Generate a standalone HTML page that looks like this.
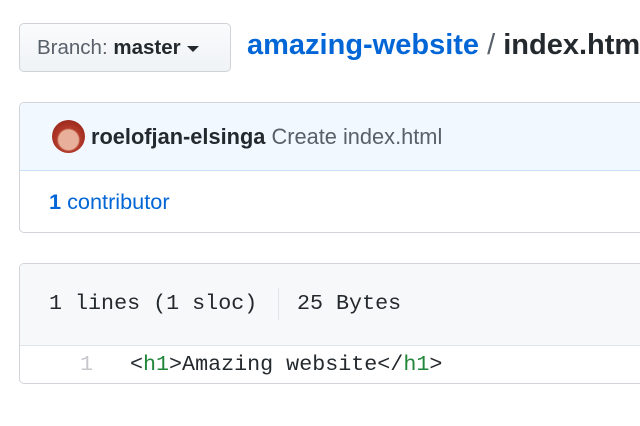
<!DOCTYPE html>
<html><head><style>
body{margin:0;width:640px;height:426px;overflow:hidden;background:#fff;font-family:"Liberation Sans",sans-serif;position:relative}
.btn{position:absolute;left:19px;top:23px;width:212px;height:49px;border:1px solid #cfd3d7;border-radius:5px;background:linear-gradient(#fafbfc,#eff3f6);box-sizing:border-box;font-size:20.5px;line-height:47px;padding-left:17px;color:#586069;white-space:nowrap}
.btn b{color:#24292e}
.caret{display:inline-block;width:0;height:0;border-left:6px solid transparent;border-right:6px solid transparent;border-top:6px solid #24292e;vertical-align:middle;margin-left:6px}
.bc{position:absolute;left:247px;top:29px;font-size:29px;font-weight:bold;color:#24292e;white-space:nowrap}
.bc a{color:#0366d6}
.bc .s{font-weight:normal;color:#586069}
.box{position:absolute;left:19px;width:640px;border:1px solid #d1d5da;border-radius:5px;box-sizing:border-box;overflow:hidden}
.b1{top:102px;height:131px}
.h1{height:68px;background:#f1f8ff;border-bottom:1px solid #c8e1ff;box-sizing:border-box;position:relative}
.av{position:absolute;left:32px;top:17px;width:33px;height:33px;border-radius:50%;background:radial-gradient(circle at 50% 60%,#e8b09a 0 38%,#b23a2a 45%,#8a1e14 100%)}
.h1 .t{position:absolute;left:71px;top:21px;font-size:21.8px;color:#586069;white-space:nowrap}
.h1 .t b{color:#24292e}
.contrib{position:absolute;left:29px;top:86px;font-size:21.7px;color:#0366d6}
.b2{top:263px;height:121px}
.h2{height:82px;background:#f6f8fa;border-bottom:1px solid #e1e4e8;box-sizing:border-box;font-family:"Liberation Mono",monospace;font-size:21.7px;color:#24292e;position:relative}
.h2 .a{position:absolute;left:29px;top:27px}
.h2 .sep{position:absolute;left:258px;top:24px;width:1px;height:32px;background:#e1e4e8}
.h2 .b{position:absolute;left:277px;top:27px}
.code{position:relative;height:38px;font-family:"Liberation Mono",monospace;font-size:21.7px;color:#24292e}
.code .n{position:absolute;left:60px;top:6px;color:#c6c8cb}
.code .c{position:absolute;left:110px;top:6px;white-space:pre}
.g{color:#22863a}
</style></head><body>
<div class="btn">Branch: <b>master</b><span class="caret"></span></div>
<div class="bc"><a>amazing-website</a> <span class="s">/</span> index.html</div>
<div class="box b1">
 <div class="h1"><div class="av"></div><div class="t"><b>roelofjan-elsinga</b> Create index.html</div></div>
 <div class="contrib"><b>1</b> contributor</div>
</div>
<div class="box b2">
 <div class="h2"><span class="a">1 lines (1 sloc)</span><span class="sep"></span><span class="b">25 Bytes</span></div>
 <div class="code"><span class="n">1</span><span class="c">&lt;<span class="g">h1</span>&gt;Amazing website&lt;/<span class="g">h1</span>&gt;</span></div>
</div>
</body></html>
